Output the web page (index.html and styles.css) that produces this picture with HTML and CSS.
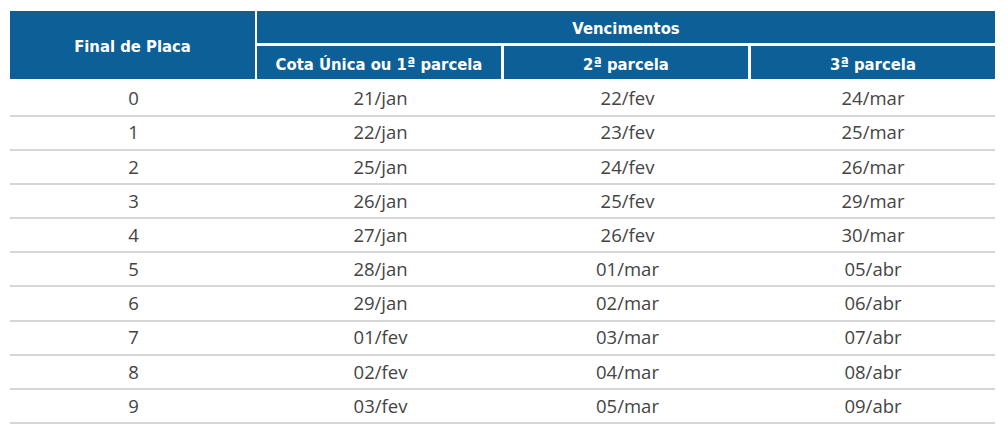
FILE: index.html
```html
<!DOCTYPE html>
<html lang="pt-BR">
<head>
<meta charset="utf-8">
<title>Vencimentos</title>
<link rel="stylesheet" href="styles.css">
</head>
<body>
<table class="venc">
  <colgroup>
    <col class="c1"><col class="c2"><col class="c3"><col class="c4">
  </colgroup>
  <thead>
    <tr class="h1">
      <th rowspan="2" class="placa">Final de Placa</th>
      <th colspan="3" class="top">Vencimentos</th>
    </tr>
    <tr class="h2">
      <th class="sep">Cota Única ou 1ª parcela</th>
      <th class="sep">2ª parcela</th>
      <th>3ª parcela</th>
    </tr>
  </thead>
  <tbody>
    <tr><td>0</td><td>21/jan</td><td>22/fev</td><td>24/mar</td></tr>
    <tr><td>1</td><td>22/jan</td><td>23/fev</td><td>25/mar</td></tr>
    <tr><td>2</td><td>25/jan</td><td>24/fev</td><td>26/mar</td></tr>
    <tr><td>3</td><td>26/jan</td><td>25/fev</td><td>29/mar</td></tr>
    <tr><td>4</td><td>27/jan</td><td>26/fev</td><td>30/mar</td></tr>
    <tr><td>5</td><td>28/jan</td><td>01/mar</td><td>05/abr</td></tr>
    <tr><td>6</td><td>29/jan</td><td>02/mar</td><td>06/abr</td></tr>
    <tr><td>7</td><td>01/fev</td><td>03/mar</td><td>07/abr</td></tr>
    <tr><td>8</td><td>02/fev</td><td>04/mar</td><td>08/abr</td></tr>
    <tr><td>9</td><td>03/fev</td><td>05/mar</td><td>09/abr</td></tr>
  </tbody>
</table>
</body>
</html>
```

FILE: styles.css
```css
html, body {
  margin: 0;
  padding: 0;
  background: #ffffff;
}

body {
  padding: 11px 0 0 10px;
}

.venc {
  width: 985px;
  border-collapse: separate;
  border-spacing: 0;
  table-layout: fixed;
}

.c1 { width: 247px; }
.c2 { width: 247px; }
.c3 { width: 247px; }
.c4 { width: 244px; }

.venc th {
  background: #0d5f97;
  color: #ffffff;
  font-family: "DejaVu Sans Condensed", "DejaVu Sans", sans-serif;
  font-weight: bold;
  font-size: 16.5px;
  text-align: center;
  padding: 5px 0 0 0;
  line-height: 1;
}

.venc .placa {
  border-right: 2px solid #ffffff;
}

.venc .top {
  height: 27px;
  border-bottom: 3px solid #ffffff;
}

.venc .h2 th {
  height: 28px;
}

.venc .h2 th.sep {
  border-right: 3px solid #ffffff;
}

.venc td {
  font-family: "Open Sans", "Noto Sans", sans-serif;
  font-size: 18.5px;
  color: #444444;
  text-align: center;
  padding: 0;
  height: 32.2px;
  line-height: 1;
  border-bottom: 2px solid #d6d6d6;
}

.venc tbody tr:first-child td {
  height: 33.5px;
  padding-top: 2px;
}
```
